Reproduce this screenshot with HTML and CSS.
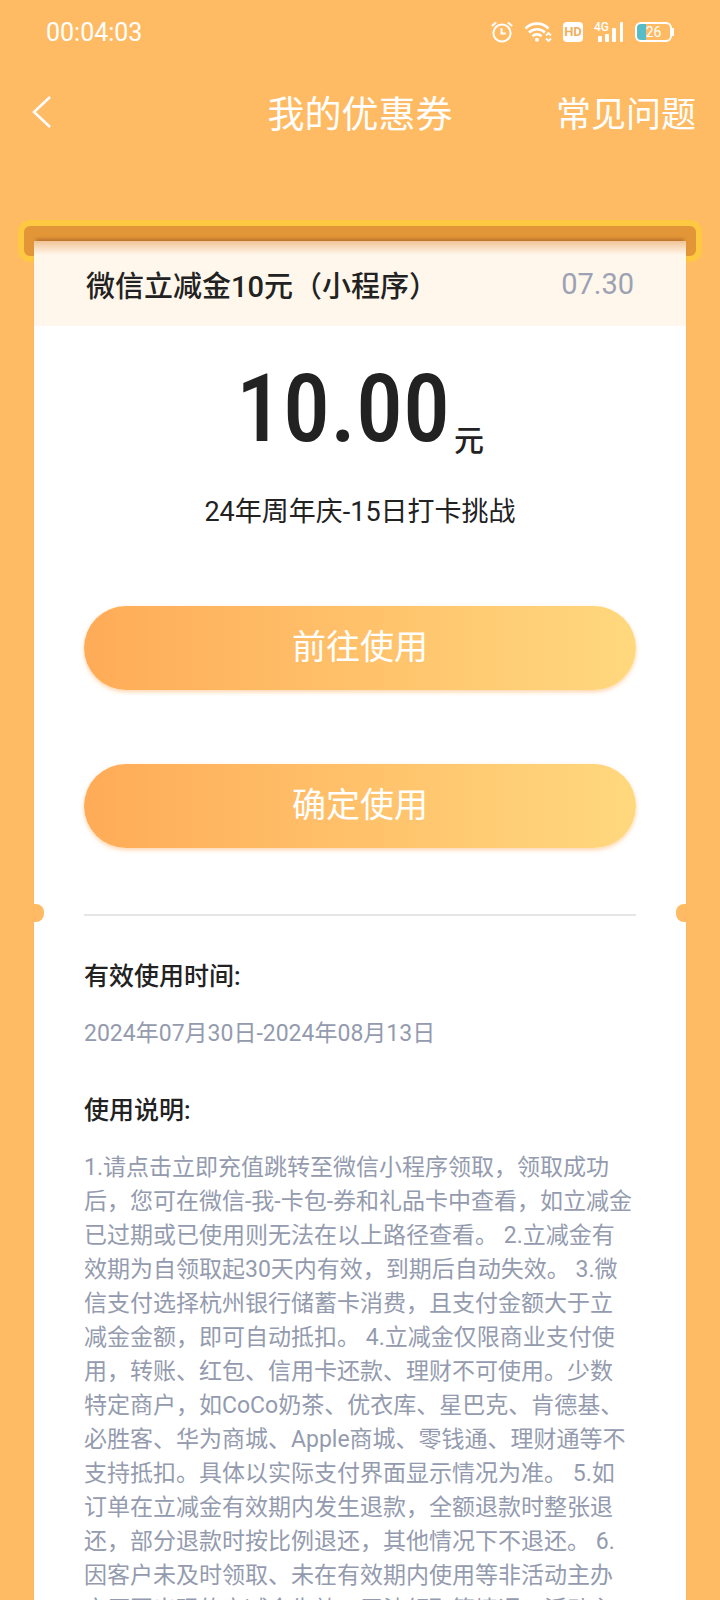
FILE: index.html
```html
<!DOCTYPE html>
<html lang="zh-CN">
<head>
<meta charset="utf-8">
<meta name="viewport" content="width=device-width, initial-scale=1">
<title>我的优惠券</title>
<link rel="stylesheet" href="styles.css">
</head>
<body>
<div class="app">
  <div class="status">
    <span class="clock">00:04:03</span>
    <div class="status-icons">
      <svg width="22" height="22" viewBox="0 0 22 22" fill="none" stroke="currentColor" stroke-width="2" stroke-linecap="round" aria-hidden="true">
        <circle cx="11" cy="12" r="8.6"/><path d="M10.5 8v4.5h3.5M1.5 4.5 4.5 2M20.5 4.500 17.500 2"/>
      </svg>
      <svg width="28" height="22" viewBox="0 0 28 22" fill="none" stroke="currentColor" stroke-width="2.600" aria-hidden="true">
        <path d="M1.500 7.500a16 16 0 0 1 23 0M5 11.500a11.500 11.500 0 0 1 16 0M8.500 15.200a6.500 6.500 0 0 1 9 0"/>
        <circle cx="13" cy="18.800" r="2" fill="currentColor" stroke="none"/>
        <path d="m22 14.500 2.500-2.500 2.500 2.500M22 17.500l2.500 2.500 2.500-2.500" stroke-width="1.800"/>
      </svg>
      <span class="hd">HD</span>
      <span class="signal">
        <svg width="30" height="22" viewBox="0 0 30 22" fill="currentColor" aria-hidden="true">
          <rect x="4" y="15" width="4" height="6" rx="1"/><rect x="11" y="13" width="4" height="8" rx="1"/><rect x="18" y="7" width="4" height="14" rx="1"/><rect x="26" y="1" width="3" height="20" rx="1"/>
        </svg>
        <span class="net">4G</span>
      </span>
      <span class="battery">26</span>
    </div>
  </div>

  <header class="nav">
    <button class="back" type="button" aria-label="返回">
      <svg width="20" height="34" viewBox="0 0 20 34" fill="none" stroke="currentColor" stroke-width="2.500" aria-hidden="true"><path d="M18 2 2 17l16 15"/></svg>
    </button>
    <h1 class="nav-title">我的优惠券</h1>
    <a class="faq" href="#faq">常见问题</a>
  </header>

  <main class="content">
    <div class="slot"></div>
    <article class="coupon">
      <div class="coupon-head">
        <h2 class="coupon-name">微信立减金10元（小程序）</h2>
        <span class="coupon-date">07.30</span>
      </div>
      <section class="offer">
        <p class="amount">10.00<span class="unit">元</span></p>
        <p class="event">24年周年庆-15日打卡挑战</p>
        <button class="action" type="button">前往使用</button>
        <button class="action" type="button">确定使用</button>
      </section>
      <div class="tear"><hr class="rule"></div>
      <section class="details">
        <h3 class="label">有效使用时间:</h3>
        <p class="text">2024年07月30日-2024年08月13日</p>
        <h3 class="label">使用说明:</h3>
        <p class="text">1.请点击立即充值跳转至微信小程序领取，领取成功后，您可在微信-我-卡包-券和礼品卡中查看，如立减金已过期或已使用则无法在以上路径查看。 2.立减金有效期为自领取起30天内有效，到期后自动失效。 3.微信支付选择杭州银行储蓄卡消费，且支付金额大于立减金金额，即可自动抵扣。 4.立减金仅限商业支付使用，转账、红包、信用卡还款、理财不可使用。少数特定商户，如CoCo奶茶、优衣库、星巴克、肯德基、必胜客、华为商城、Apple商城、零钱通、理财通等不支持抵扣。具体以实际支付界面显示情况为准。 5.如订单在立减金有效期内发生退款，全额退款时整张退还，部分退款时按比例退还，其他情况下不退还。 6.因客户未及时领取、未在有效期内使用等非活动主办方原因出现的立减金失效，无法领取等情况，活动主</p>
      </section>
    </article>
  </main>
</div>
</body>
</html>
```
FILE: styles.css
```css
* { box-sizing: border-box; }

body {
  margin: 0;
  background: #ffbb64;
  color: #222;
  font-family: Roboto, "Noto Sans CJK SC", sans-serif;
}

h1, h2, h3, p { margin: 0; }

button {
  border: 0;
  padding: 0;
  background: none;
  color: inherit;
  font: inherit;
}

.app {
  display: flex;
  flex-direction: column;
  height: 100vh;
  overflow: hidden;
}

.status {
  display: flex;
  flex-shrink: 0;
  align-items: center;
  justify-content: space-between;
  height: 64px;
  padding: 0 48px 0 46px;
  color: #fff;
}

.clock { font-size: 25px; }

.status-icons {
  display: flex;
  align-items: center;
  gap: 11px;
}

.hd {
  width: 20px;
  border-radius: 4px;
  background: #fff;
  color: #f0b060;
  font-size: 13px;
  font-weight: 700;
  line-height: 20px;
  text-align: center;
}

.signal {
  position: relative;
  display: flex;
}

.net {
  position: absolute;
  top: 0;
  left: 0;
  background: #ffbb64;
  font-size: 12px;
  font-weight: 500;
  line-height: 12px;
}

.battery {
  position: relative;
  width: 37px;
  height: 20px;
  border: 2px solid #fff;
  border-radius: 6px;
  background: linear-gradient(90deg, #55bcc8 27%, transparent 27%);
  font-size: 14px;
  line-height: 16px;
  text-align: center;
}

.battery::after {
  content: "";
  position: absolute;
  top: 4px;
  right: -4px;
  width: 2px;
  height: 8px;
  background: #fff;
}

.nav {
  display: grid;
  flex-shrink: 0;
  grid-template-columns: 1fr auto 1fr;
  align-items: center;
  height: 95px;
  padding: 0 24px;
  color: #fff;
}

.back {
  display: flex;
  justify-self: start;
  padding-left: 8px;
}

.nav-title {
  font-size: 37px;
  font-weight: 400;
}

.faq {
  justify-self: end;
  color: inherit;
  font-size: 35px;
  text-decoration: none;
}

.content {
  flex-shrink: 0;
  padding: 61px 18px 0;
}

.slot {
  height: 42px;
  border: 6px solid #fec842;
  border-radius: 12px;
  background: #e29637;
}

.coupon {
  position: relative;
  margin: -21px 16px 0;
  background: #fff;
  box-shadow: 0 -4px 3px -2px #b9712f;
}

.coupon-head {
  display: flex;
  align-items: center;
  justify-content: space-between;
  height: 85px;
  padding: 0 52px;
  background: linear-gradient(#f1c496, #fff7ec 14px);
}

.coupon-name {
  font-size: 29px;
  font-weight: 500;
}

.coupon-date {
  color: #9ca2b3;
  font-size: 29px;
}

.offer {
  display: flex;
  flex-direction: column;
  padding: 22px 50px 0;
}

.amount {
  display: flex;
  align-items: flex-end;
  justify-content: center;
  gap: 4px;
  font-family: "Roboto Condensed", Roboto, sans-serif;
  font-size: 94px;
  font-weight: 500;
  line-height: 122px;
}

.unit {
  padding-bottom: 12px;
  font-family: "Noto Sans CJK SC", sans-serif;
  font-size: 30px;
  font-weight: 500;
  line-height: 40px;
}

.event {
  margin: 22px 0 74px;
  font-size: 27px;
  line-height: 40px;
  text-align: center;
}

.action {
  height: 84px;
  margin-bottom: 74px;
  padding-bottom: 8px;
  border-radius: 42px;
  background: linear-gradient(90deg, #ffab57, #ffd87e);
  box-shadow: 0 2px 4px #ffab5780;
  color: #fff;
  font-size: 34px;
}

.action:last-child { margin-bottom: 56px; }

.tear {
  position: relative;
  padding: 10px 50px 6px;
}

.tear::before,
.tear::after {
  content: "";
  position: absolute;
  top: 0;
  width: 10px;
  height: 18px;
  background: #ffbb64;
}

.tear::before {
  left: 0;
  border-radius: 0 8px 8px 0;
}

.tear::after {
  right: 0;
  border-radius: 8px 0 0 8px;
}

.rule {
  height: 2px;
  margin: 0;
  border: 0;
  background: #e6e6e8;
}

.details { padding: 35px 50px 0; }

.label {
  font-size: 25px;
  font-weight: 500;
  line-height: 40px;
}

.text {
  margin: 20px 0 40px;
  padding-right: 2px;
  color: #949bae;
  font-size: 23px;
  line-height: 34px;
}
```
